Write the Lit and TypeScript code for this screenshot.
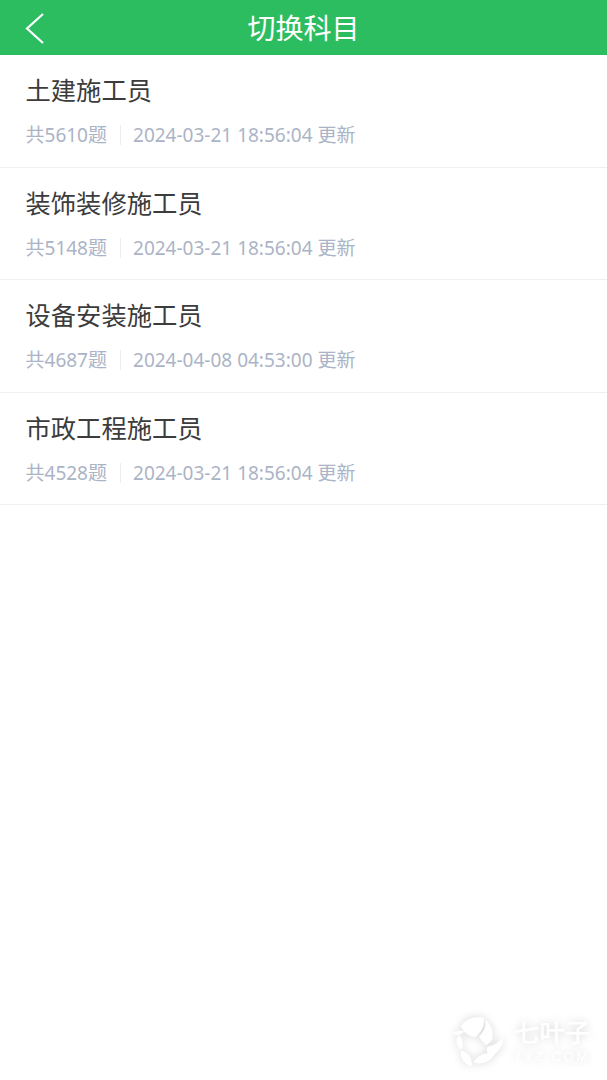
import { css, html, LitElement, svg } from 'lit';
import { customElement } from 'lit/decorators.js';

const subjects = [
  { name: '土建施工员', count: 5610, updated: '2024-03-21 18:56:04' },
  { name: '装饰装修施工员', count: 5148, updated: '2024-03-21 18:56:04' },
  { name: '设备安装施工员', count: 4687, updated: '2024-04-08 04:53:00' },
  { name: '市政工程施工员', count: 4528, updated: '2024-03-21 18:56:04' },
];

// watermark leaves, traced on the 3x crop
const leaves = [
  'M62 78C72 56 100 46 130 50C136 72 124 98 104 110C86 108 70 96 62 78Z',
  'M134 56C152 68 162 92 156 118C150 126 144 130 138 134C128 126 122 116 116 108C132 94 140 76 134 56Z',
  'M188 110C192 130 178 158 150 168C140 162 138 150 142 138C160 136 178 126 188 110Z',
  'M100 186C112 164 136 154 164 160C154 182 126 196 100 186Z',
  'M62 150C82 154 98 170 94 198C74 192 58 174 62 150Z',
  'M56 104C68 116 72 134 62 148C48 138 44 118 56 104Z',
  'M40 100C48 90 60 88 72 92C64 102 52 106 40 100Z',
];

@customElement('app-root')
export class AppRoot extends LitElement {
  static styles = css`
    :host {
      display: block;
      position: relative;
      height: 1080px;
      overflow: hidden;
      background: #fff;
      font-family: 'Noto Sans', 'Noto Sans CJK SC', sans-serif;
    }

    .header {
      height: 54.5px;
      background: #2dbd61;
      display: flex;
      align-items: center;
      justify-content: center;
      position: relative;
      color: #fff;
      font-size: 28px;
    }

    .back {
      position: absolute;
      left: 24px;
      top: 12px;
      width: 22px;
      height: 33px;
    }

    .list {
      padding-top: 0.5px;
    }

    .row {
      box-sizing: border-box;
      height: 112.5px;
      padding: 17.2px 25.5px 0;
      border-bottom: 1px solid #eeeff1;
    }

    .name {
      font-size: 25.3px;
      line-height: 36px;
      color: #3c3c3c;
    }

    .meta {
      display: flex;
      align-items: center;
      margin-top: 13px;
      font-size: 19px;
      line-height: 28px;
      color: #abb4c6;
    }

    .divider {
      width: 1px;
      height: 20px;
      margin: 0 12px 0 13px;
      background: #eceef1;
    }

    .mark {
      position: absolute;
      left: 453px;
      top: 1015px;
      display: flex;
      align-items: center;
      gap: 10px;
      color: #fff;
      filter: drop-shadow(0 0 4px rgba(0, 0, 0, 0.16));
    }

    .mark svg {
      width: 51px;
      height: 53px;
    }

    .mark-text {
      display: flex;
      flex-direction: column;
      align-items: flex-start;
      gap: 4px;
    }

    .mark-cn {
      font-size: 25.5px;
      line-height: 26px;
      font-weight: 500;
    }

    .mark-en {
      font-family: 'Liberation Sans', sans-serif;
      font-size: 13px;
      line-height: 15px;
      letter-spacing: 2.6px;
    }
  `;

  render() {
    return html`
      <div class="header">
        <svg class="back" viewBox="0 0 22 33" fill="none" stroke="#fff" stroke-width="2.2">
          <path d="M19 2 L3 16.5 L19 31" />
        </svg>
        切换科目
      </div>
      <div class="list">
        ${subjects.map(
          (s) => html`
            <div class="row">
              <div class="name">${s.name}</div>
              <div class="meta">
                <span>共${s.count}题</span>
                <span class="divider"></span>
                <span>${s.updated} 更新</span>
              </div>
            </div>
          `
        )}
      </div>
      <div class="mark">
        <svg viewBox="38 44 154 158" fill="#fff">
          ${leaves.map((d) => svg`<path d=${d} />`)}
        </svg>
        <div class="mark-text">
          <span class="mark-cn">七叶子</span>
          <span class="mark-en">7YZ.COM</span>
        </div>
      </div>
    `;
  }
}
